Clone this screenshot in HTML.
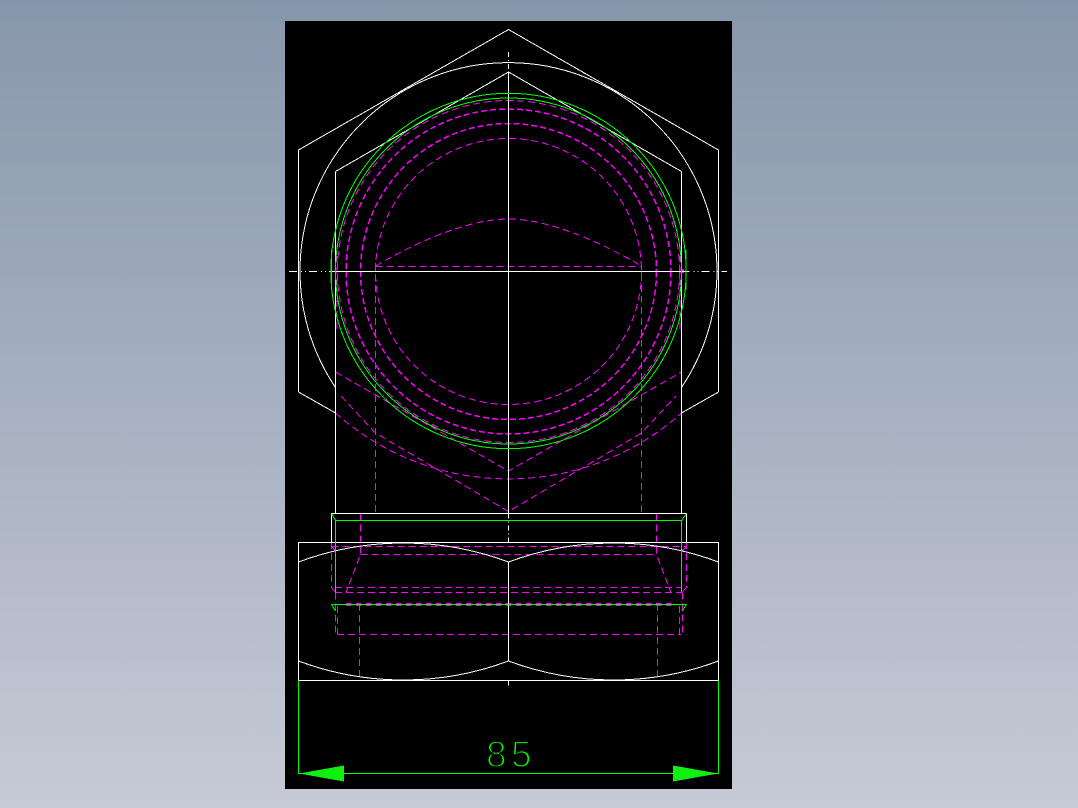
<!DOCTYPE html>
<html>
<head>
<meta charset="utf-8">
<style>
html,body{margin:0;padding:0;width:1078px;height:808px;overflow:hidden;background:linear-gradient(#8797ab,#c6cad6);}
svg{position:absolute;left:0;top:0;}
</style>
</head>
<body>
<svg width="1078" height="808" viewBox="0 0 1078 808" xmlns="http://www.w3.org/2000/svg">
<rect x="285" y="21" width="447" height="768" fill="#000"/>
<g fill="none" shape-rendering="crispEdges" stroke-width="1">
<!-- magenta hidden lines -->
<g stroke="#ff00ff" stroke-dasharray="7 4">
<circle cx="508.5" cy="271.5" r="171"/>
<circle cx="508.5" cy="271.5" r="162.5" stroke-width="1.5" stroke-dasharray="6 3"/>
<circle cx="508.5" cy="271.5" r="148" stroke-width="1.5" stroke-dasharray="6 3"/>
<circle cx="508.5" cy="271.5" r="133"/>
<path d="M375.5 266.5H641.5"/>
<path d="M375.5 266C420 240 470 219 508.5 219C547 219 597 240 641.5 266"/>
<path d="M375.5 263V513.5M641.5 263V513.5"/>
<path d="M335.5 372L508.5 471L681.5 372"/>
<path d="M341 396L375.5 433L508.5 511.5L641.5 433L676 396"/>
<path d="M335.5 413A260 260 0 0 0 681.5 413"/>
<path d="M337 245V331M680 245V331"/>
<path d="M360.5 513.5V554.5L346 592.5M656.5 513.5V554.5L671 592.5"/>
<path d="M360.5 554.5H656.5"/>
<path d="M331.5 546.5H686.5"/>
<path d="M335 587.5H682"/>
<path d="M335 592.5H682"/>
<path d="M337 634.5H681"/>
<path d="M359.5 604V680M657.5 604V680"/>
<path d="M331.5 542V587.5L335.5 592.5M686.5 542V587.5L682 592.5"/>
<path d="M331.5 546.5L335.5 550.5M686.5 546.5L682 550.5"/>
<path d="M335.5 592.5V634.5M682.5 592.5V634.5"/>
<path d="M337.5 606V634.5M679.5 606V634.5"/>
<path d="M346 604.5H671" stroke-width="3" stroke-dasharray="5 5"/>
</g>
<path d="M681 269h3v4h-3z" fill="#ff00ff" stroke="none"/>
<!-- white lines -->
<g stroke="#fff">
<path d="M298.5 392V150L508.5 29.5L718.5 150V392"/>
<path d="M298.5 392L335.5 413M718.5 392L681.5 413"/>
<path d="M335.5 171.5V513.5M681.5 171.5V513.5M335.5 171.5L508.5 72L681.5 171.5"/>
<path d="M335.5 387.5A208.5 208.5 0 1 1 681.5 387.5"/>
<path d="M335.5 271.5H681.5"/>
<path d="M508.5 72V513.5M508.5 562V661"/>
<path d="M508.5 52V72M508.5 513.5V542M508.5 680.5V687" stroke-dasharray="5 3 1 3"/>
<path d="M289 271.5H335.5M681.5 271.5H727" stroke-dasharray="8 4 1 3 1 3"/>
<path d="M331.5 542V513.5H686.5V542"/>
<path d="M298.5 542.5H718.5V680.5H298.5Z"/>
<path d="M298.5 562A300 300 0 0 1 508.5 562A300 300 0 0 1 718.5 562"/>
<path d="M298.5 661A300 300 0 0 0 508.5 661A300 300 0 0 0 718.5 661"/>
</g>
<!-- green lines -->
<g stroke="#00ff00">
<circle cx="508.5" cy="271" r="177.7"/>
<circle cx="508.5" cy="271" r="173"/>
<path d="M331.5 250V290M686 250V290"/>
<path d="M335.5 592.5V520.5H681.5V592.5"/>
<path d="M331.5 513.5L335.5 520.5M686.5 513.5L681.5 520.5"/>
<path d="M331.5 604.5H686.5"/>
<path d="M331.5 604.5L335.5 611M686.5 604.5L682 611"/>
<path d="M298.5 680.5V773.5H718.5V680.5"/>
</g>
<path d="M299 773.5L344 765.5V781.5Z" fill="#10f010" stroke="none"/>
<path d="M718 773.5L673 765.5V781.5Z" fill="#10f010" stroke="none"/>
</g>
<text y="767" font-family="'Liberation Sans',sans-serif" font-size="37" fill="#00ff00" stroke="#000" stroke-width="1.7" paint-order="fill stroke"><tspan x="486">8</tspan><tspan x="511">5</tspan></text>
</svg>
</body>
</html>
